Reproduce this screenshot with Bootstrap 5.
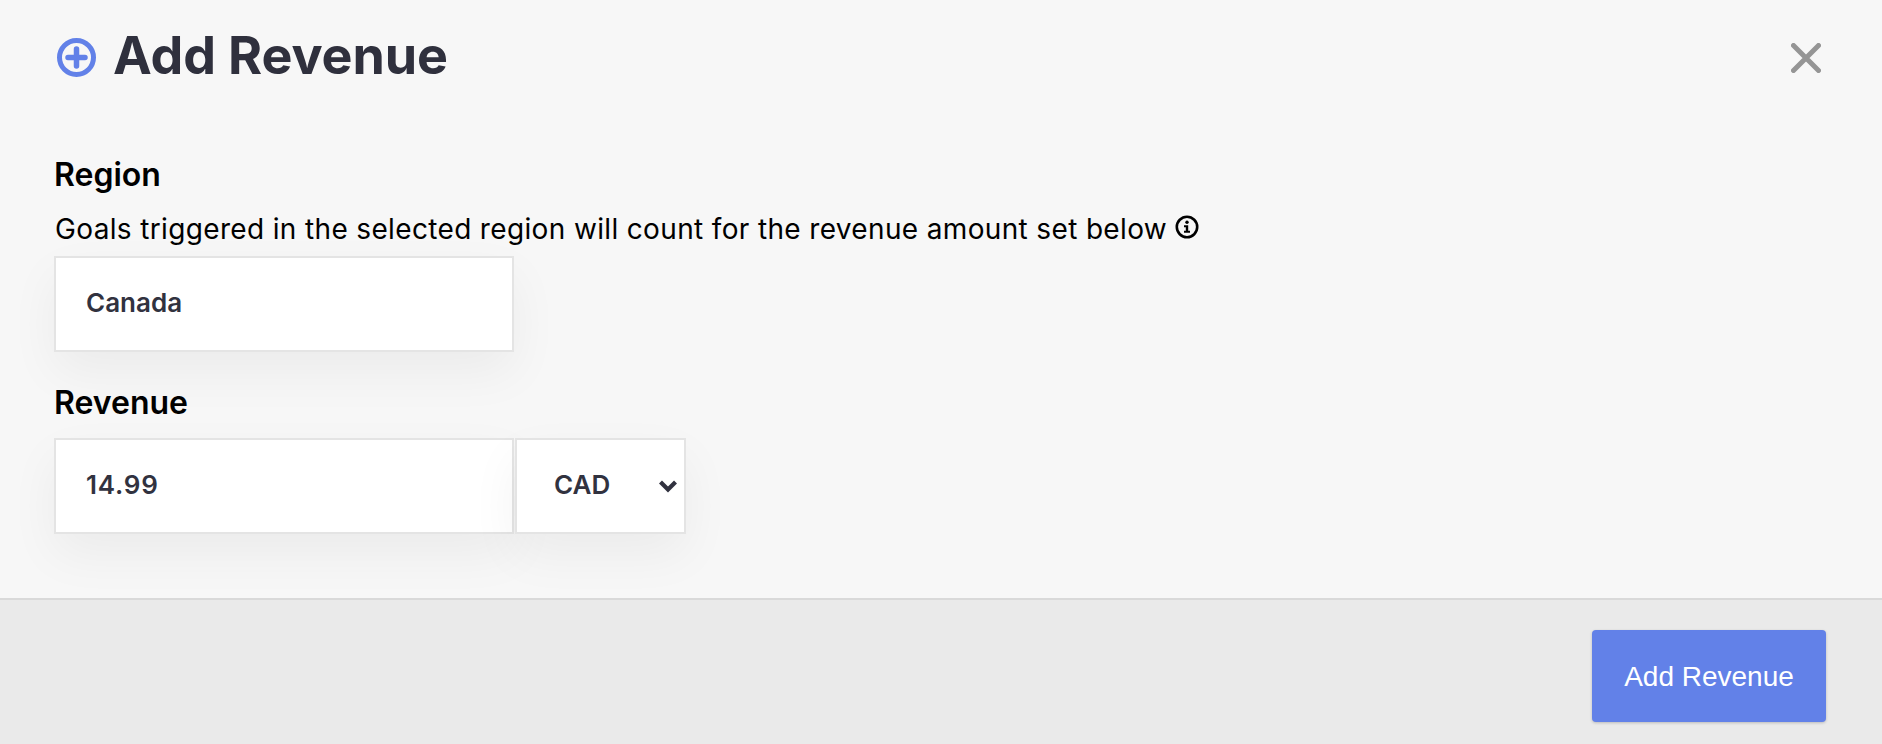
<!DOCTYPE html>
<html lang="en">
<head>
<meta charset="utf-8">
<title>Add Revenue</title>
<link href="https://cdn.jsdelivr.net/npm/bootstrap@5.3.0/dist/css/bootstrap.min.css" rel="stylesheet">
<style>
html,body{height:744px;overflow:hidden}
body{background:#f7f7f7;font-family:Inter,"Liberation Sans",sans-serif;color:#000}
.rv-shell{height:744px}
.rv-head{height:115px;padding:0 61px 0 57px}
.rv-title{font-size:52px;font-weight:700;letter-spacing:-.1px;color:#2f303d;margin:0 0 0 17px;line-height:1.2;padding-bottom:3px}
.rv-body{padding:38px 55px 0 54px;flex:1}
.rv-label{font-size:32px;font-weight:600;line-height:44px;margin:0}
.rv-help{font-size:28px;letter-spacing:.35px;line-height:40px;margin:12px 0 7px;padding-left:1px}
.rv-info{vertical-align:0;margin-left:0}
.rv-box{height:96px;background:#fff;border:2px solid #e4e4e4;font-size:26px;font-weight:600;color:#31323f;padding:0 30px 3px;box-shadow:0 20px 50px rgba(0,0,0,.05)}
.rv-num{letter-spacing:.8px}
.rv-w1{width:460px}
.rv-w2{width:171px;padding:0 0 3px 37px;margin-left:1px}
.rv-gap{margin-top:29px}
.rv-row{margin-top:13px}
.rv-foot{height:146px;background:#eaeaea;border-top:2px solid #d9d9d9;padding:30px 56px 0 0}
.rv-btn{width:234px;height:92px;background:#6281e8;border:0;border-radius:4px;box-shadow:0 1px 3px rgba(0,0,0,.2);color:#fff;font-size:28px;font-family:"Liberation Sans",sans-serif;padding-top:8px}
.rv-btn:hover{background:#6281e8;color:#fff}
.rv-close{background:none;border:0;padding:0;line-height:0}
.rv-chev{margin-right:5px;position:relative;top:1px}
</style>
</head>
<body>
<div class="rv-shell d-flex flex-column">
  <div class="rv-head d-flex align-items-center justify-content-between">
    <div class="d-flex align-items-center">
      <svg width="39" height="39" viewBox="0 0 39 39"><circle cx="19.5" cy="19.5" r="17" fill="none" stroke="#6281e8" stroke-width="5"/><path d="M19.500 11v17M11 19.500h17" stroke="#6281e8" stroke-width="5.500" stroke-linecap="round"/></svg>
      <h1 class="rv-title">Add Revenue</h1>
    </div>
    <button class="rv-close" aria-label="Close"><svg width="30" height="30" viewBox="0 0 30 30"><path d="M2.500 2.500l25 25M27.500 2.500l-25 25" stroke="#959595" stroke-width="5" stroke-linecap="round"/></svg></button>
  </div>
  <div class="rv-body">
    <p class="rv-label">Region</p>
    <p class="rv-help">Goals triggered in the selected region will count for the revenue amount set below <svg class="rv-info" width="24" height="24" viewBox="0 0 24 24"><circle cx="12" cy="12" r="10.200" fill="none" stroke="#000" stroke-width="2.600"/><circle cx="12" cy="7.300" r="1.700"/><path d="M9 10.300h4.200v5.500H15v2H9v-2h1.800v-3.500H9z"/></svg></p>
    <div class="rv-box rv-w1 d-flex align-items-center">Canada</div>
    <p class="rv-label rv-gap">Revenue</p>
    <div class="d-flex rv-row">
      <div class="rv-box rv-w1 d-flex align-items-center"><span class="rv-num">14.99</span></div>
      <div class="rv-box rv-w2 d-flex align-items-center justify-content-between">CAD<svg class="rv-chev" width="22" height="16" viewBox="0 0 22 16"><path d="M3.500 4l7.500 7.500L18.500 4" fill="none" stroke="#31323f" stroke-width="4.200"/></svg></div>
    </div>
  </div>
  <div class="rv-foot d-flex justify-content-end align-items-start">
    <button class="btn rv-btn">Add Revenue</button>
  </div>
</div>
<script src="https://cdn.jsdelivr.net/npm/bootstrap@5.3.0/dist/js/bootstrap.bundle.min.js"></script>
</body>
</html>
